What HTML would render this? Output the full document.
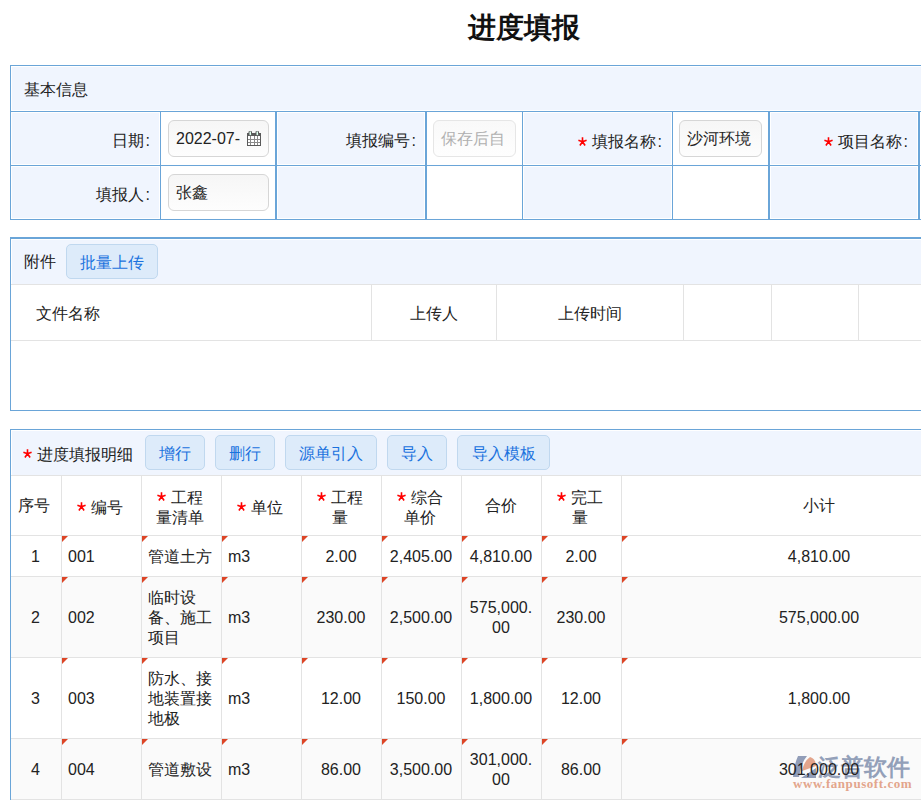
<!DOCTYPE html>
<html><head><meta charset="utf-8">
<style>
*{margin:0;padding:0;box-sizing:border-box}
html,body{width:921px;height:800px;overflow:hidden;background:#fff}
body{position:relative;font-family:"Liberation Sans",sans-serif;font-size:16px;color:#222}
.a{position:absolute}
.t{position:absolute;white-space:nowrap;line-height:20px}
.st{display:inline-block;vertical-align:0px;margin-right:5px}
.c{margin-left:2px}
.inp{position:absolute;height:37px;border:1px solid #d6d6d6;border-radius:6px;background:linear-gradient(#f6f6f6,#fdfdfd);overflow:hidden;white-space:nowrap;line-height:35px;padding-left:7px}
.btn{position:absolute;height:35px;border:1px solid #c0d8ef;border-radius:5px;background:#ddebfa;color:#1a72de;text-align:center;line-height:34px;white-space:nowrap;padding-top:1px}
.tri{position:absolute;width:0;height:0;border-top:6px solid #dc4526;border-right:6px solid transparent}
</style></head><body>
<div class="t" style="left:468px;top:10px;font-size:28px;line-height:36px;font-weight:bold;color:#111">进度填报</div>
<div class="a" style="left:11px;top:66px;width:910px;height:45px;background:#f0f5fe;border-top:1px solid #fff;border-left:1px solid #fff;border-bottom:1px solid #fff"></div>
<div class="a" style="left:10px;top:65px;width:911px;height:1px;background:#6aa5d8"></div>
<div class="a" style="left:10px;top:65px;width:1px;height:155px;background:#6aa5d8"></div>
<div class="t" style="left:24px;top:80px;">基本信息</div>
<div class="a" style="left:10px;top:111px;width:911px;height:1px;background:#6aa5d8"></div>
<div class="a" style="left:10px;top:165px;width:911px;height:1px;background:#6aa5d8"></div>
<div class="a" style="left:10px;top:219px;width:911px;height:1px;background:#6aa5d8"></div>
<div class="a" style="left:11px;top:112px;width:149px;height:53px;background:#f0f5fe;border:1px solid #fff"></div>
<div class="a" style="left:277px;top:112px;width:148px;height:53px;background:#f0f5fe;border:1px solid #fff"></div>
<div class="a" style="left:523px;top:112px;width:149px;height:53px;background:#f0f5fe;border:1px solid #fff"></div>
<div class="a" style="left:770px;top:112px;width:148px;height:53px;background:#f0f5fe;border:1px solid #fff"></div>
<div class="a" style="left:920px;top:112px;width:10px;height:53px;background:#f0f5fe;border:1px solid #fff"></div>
<div class="a" style="left:11px;top:166px;width:149px;height:53px;background:#f0f5fe;border:1px solid #fff"></div>
<div class="a" style="left:277px;top:166px;width:148px;height:53px;background:#f0f5fe;border:1px solid #fff"></div>
<div class="a" style="left:523px;top:166px;width:149px;height:53px;background:#f0f5fe;border:1px solid #fff"></div>
<div class="a" style="left:770px;top:166px;width:148px;height:53px;background:#f0f5fe;border:1px solid #fff"></div>
<div class="a" style="left:920px;top:166px;width:10px;height:53px;background:#f0f5fe;border:1px solid #fff"></div>
<div class="a" style="left:160px;top:111px;width:1px;height:55px;background:#6aa5d8"></div>
<div class="a" style="left:275px;top:111px;width:2px;height:55px;background:#6aa5d8"></div>
<div class="a" style="left:425px;top:111px;width:2px;height:55px;background:#6aa5d8"></div>
<div class="a" style="left:522px;top:111px;width:1px;height:55px;background:#6aa5d8"></div>
<div class="a" style="left:672px;top:111px;width:1px;height:55px;background:#6aa5d8"></div>
<div class="a" style="left:768px;top:111px;width:2px;height:55px;background:#6aa5d8"></div>
<div class="a" style="left:918px;top:111px;width:2px;height:55px;background:#6aa5d8"></div>
<div class="a" style="left:160px;top:165px;width:1px;height:55px;background:#6aa5d8"></div>
<div class="a" style="left:275px;top:165px;width:2px;height:55px;background:#6aa5d8"></div>
<div class="a" style="left:425px;top:165px;width:2px;height:55px;background:#6aa5d8"></div>
<div class="a" style="left:522px;top:165px;width:1px;height:55px;background:#6aa5d8"></div>
<div class="a" style="left:672px;top:165px;width:1px;height:55px;background:#6aa5d8"></div>
<div class="a" style="left:768px;top:165px;width:2px;height:55px;background:#6aa5d8"></div>
<div class="a" style="left:918px;top:165px;width:2px;height:55px;background:#6aa5d8"></div>
<div class="t" style="right:771px;top:131px;">日期<span class=c>:</span></div>
<div class="t" style="right:505px;top:131px;">填报编号<span class=c>:</span></div>
<div class="t" style="right:259px;top:132px;"><svg class="st" style="vertical-align:1px" width="9" height="9" viewBox="0 0 9 9"><path d="M4.5 4.7V0.2M4.5 4.7L0.4 3.3M4.5 4.7L8.6 3.3M4.5 4.7L1.9 8.5M4.5 4.7L7.1 8.5" stroke="#f00" stroke-width="1.6" fill="none"/></svg>填报名称<span class=c>:</span></div>
<div class="t" style="right:13px;top:132px;"><svg class="st" style="vertical-align:1px" width="9" height="9" viewBox="0 0 9 9"><path d="M4.5 4.7V0.2M4.5 4.7L0.4 3.3M4.5 4.7L8.6 3.3M4.5 4.7L1.9 8.5M4.5 4.7L7.1 8.5" stroke="#f00" stroke-width="1.6" fill="none"/></svg>项目名称<span class=c>:</span></div>
<div class="t" style="right:771px;top:185px;">填报人<span class=c>:</span></div>
<div class="inp" style="left:168px;top:120px;width:101px;">2022-07-<svg class="a" style="left:78px;top:10px" width="14" height="15" viewBox="0 0 14 15"><rect x="0.5" y="2.5" width="13" height="12" fill="#fff" stroke="#5a5a5a"/><rect x="0" y="2" width="14" height="3" fill="#5a5a5a"/><path d="M3.5 5v9M7.5 5v9M10.5 5v9M1 8.5h12M1 11.5h12" stroke="#8a8a8a" stroke-width="1"/><rect x="2" y="0" width="2.5" height="4.5" rx="1" fill="#dfe" stroke="#5a5a5a" stroke-width="1"/><rect x="9" y="0" width="2.5" height="4.5" rx="1" fill="#dfe" stroke="#5a5a5a" stroke-width="1"/></svg></div>
<div class="inp" style="left:433px;top:120px;width:83px;color:#b0b0b0;border-color:#e6e6e6;background:linear-gradient(#f9f9f9,#fefefe)">保存后自</div>
<div class="inp" style="left:679px;top:120px;width:83px;">沙河环境</div>
<div class="inp" style="left:168px;top:174px;width:101px;">张鑫</div>
<div class="a" style="left:11px;top:239px;width:910px;height:45px;background:#f0f5fe;border-top:1px solid #fff;border-left:1px solid #fff"></div>
<div class="a" style="left:10px;top:237px;width:911px;height:2px;background:#6aa5d8"></div>
<div class="a" style="left:10px;top:237px;width:1px;height:174px;background:#6aa5d8"></div>
<div class="a" style="left:10px;top:410px;width:911px;height:1px;background:#6aa5d8"></div>
<div class="t" style="left:24px;top:252px;">附件</div>
<div class="btn" style="left:66px;top:244px;width:92px">批量上传</div>
<div class="a" style="left:11px;top:284px;width:910px;height:1px;background:#e3e3e3"></div>
<div class="a" style="left:11px;top:340px;width:910px;height:1px;background:#e3e3e3"></div>
<div class="a" style="left:371px;top:285px;width:1px;height:55px;background:#e3e3e3"></div>
<div class="a" style="left:496px;top:285px;width:1px;height:55px;background:#e3e3e3"></div>
<div class="a" style="left:683px;top:285px;width:1px;height:55px;background:#e3e3e3"></div>
<div class="a" style="left:771px;top:285px;width:1px;height:55px;background:#e3e3e3"></div>
<div class="a" style="left:858px;top:285px;width:1px;height:55px;background:#e3e3e3"></div>
<div class="t" style="left:36px;top:304px;">文件名称</div>
<div class="t" style="left:371px;top:304px;width:125px;text-align:center;">上传人</div>
<div class="t" style="left:496px;top:304px;width:187px;text-align:center;">上传时间</div>
<div class="a" style="left:11px;top:430px;width:910px;height:45px;background:#f0f5fe;border-top:1px solid #fff;border-left:1px solid #fff"></div>
<div class="a" style="left:10px;top:429px;width:911px;height:1px;background:#6aa5d8"></div>
<div class="a" style="left:10px;top:429px;width:1px;height:371px;background:#6aa5d8"></div>
<div class="t" style="left:23px;top:445px;"><svg class="st" style="vertical-align:2px" width="9" height="9" viewBox="0 0 9 9"><path d="M4.5 4.7V0.2M4.5 4.7L0.4 3.3M4.5 4.7L8.6 3.3M4.5 4.7L1.9 8.5M4.5 4.7L7.1 8.5" stroke="#f00" stroke-width="1.6" fill="none"/></svg>进度填报明细</div>
<div class="btn" style="left:145px;top:435px;width:60px;height:35px;line-height:33px">增行</div>
<div class="btn" style="left:215px;top:435px;width:60px;height:35px;line-height:33px">删行</div>
<div class="btn" style="left:285px;top:435px;width:92px;height:35px;line-height:33px">源单引入</div>
<div class="btn" style="left:387px;top:435px;width:60px;height:35px;line-height:33px">导入</div>
<div class="btn" style="left:457px;top:435px;width:93px;height:35px;line-height:33px">导入模板</div>
<div class="a" style="left:11px;top:475px;width:910px;height:1px;background:#e3e3e3"></div>
<div class="a" style="left:11px;top:577px;width:910px;height:80px;background:#fafafa;"></div>
<div class="a" style="left:11px;top:739px;width:910px;height:61px;background:#fafafa;"></div>
<svg class="a" style="left:790px;top:754px" width="30" height="28" viewBox="0 0 30 28">
<path d="M8 2 L17 2 Q11 9 9 23 L3 23 Q4 11 8 2 Z" fill="#8592b0" opacity="0.9"/>
<path d="M12 17 Q14 7 20 3 Q26 5 26 12 Z" fill="#e3a58c"/>
<path d="M11 24 L26 14 L26 24 Z" fill="#8592b0" opacity="0.9"/>
</svg>
<div class="t" style="left:818px;top:753px;font-size:23px;line-height:28px;font-weight:bold;color:#93a0b9">泛普软件</div>
<div class="t" style="left:793px;top:777px;font-family:'Liberation Serif',serif;font-weight:bold;font-size:13px;line-height:14px;color:#e3a58c;letter-spacing:0.55px">www.fanpusoft.com</div>
<div class="a" style="left:11px;top:535px;width:910px;height:1px;background:#e3e3e3"></div>
<div class="a" style="left:11px;top:576px;width:910px;height:1px;background:#e3e3e3"></div>
<div class="a" style="left:11px;top:657px;width:910px;height:1px;background:#e3e3e3"></div>
<div class="a" style="left:11px;top:738px;width:910px;height:1px;background:#e3e3e3"></div>
<div class="a" style="left:11px;top:799px;width:910px;height:1px;background:#e3e3e3"></div>
<div class="a" style="left:61px;top:476px;width:1px;height:324px;background:#e3e3e3"></div>
<div class="a" style="left:141px;top:476px;width:1px;height:324px;background:#e3e3e3"></div>
<div class="a" style="left:221px;top:476px;width:1px;height:324px;background:#e3e3e3"></div>
<div class="a" style="left:301px;top:476px;width:1px;height:324px;background:#e3e3e3"></div>
<div class="a" style="left:381px;top:476px;width:1px;height:324px;background:#e3e3e3"></div>
<div class="a" style="left:461px;top:476px;width:1px;height:324px;background:#e3e3e3"></div>
<div class="a" style="left:541px;top:476px;width:1px;height:324px;background:#e3e3e3"></div>
<div class="a" style="left:621px;top:476px;width:1px;height:324px;background:#e3e3e3"></div>
<div class="t" style="left:8px;top:496px;width:51px;text-align:center;">序号</div>
<div class="t" style="left:61px;top:498px;width:80px;text-align:center;padding-right:3px"><svg class="st" style="vertical-align:2px" width="9" height="9" viewBox="0 0 9 9"><path d="M4.5 4.7V0.2M4.5 4.7L0.4 3.3M4.5 4.7L8.6 3.3M4.5 4.7L1.9 8.5M4.5 4.7L7.1 8.5" stroke="#f00" stroke-width="1.6" fill="none"/></svg>编号</div>
<div class="t" style="left:141px;top:488px;width:80px;text-align:center;padding-right:3px"><svg class="st" style="vertical-align:2px" width="9" height="9" viewBox="0 0 9 9"><path d="M4.5 4.7V0.2M4.5 4.7L0.4 3.3M4.5 4.7L8.6 3.3M4.5 4.7L1.9 8.5M4.5 4.7L7.1 8.5" stroke="#f00" stroke-width="1.6" fill="none"/></svg>工程<br>量清单</div>
<div class="t" style="left:221px;top:498px;width:80px;text-align:center;padding-right:3px"><svg class="st" style="vertical-align:2px" width="9" height="9" viewBox="0 0 9 9"><path d="M4.5 4.7V0.2M4.5 4.7L0.4 3.3M4.5 4.7L8.6 3.3M4.5 4.7L1.9 8.5M4.5 4.7L7.1 8.5" stroke="#f00" stroke-width="1.6" fill="none"/></svg>单位</div>
<div class="t" style="left:301px;top:488px;width:80px;text-align:center;padding-right:3px"><svg class="st" style="vertical-align:2px" width="9" height="9" viewBox="0 0 9 9"><path d="M4.5 4.7V0.2M4.5 4.7L0.4 3.3M4.5 4.7L8.6 3.3M4.5 4.7L1.9 8.5M4.5 4.7L7.1 8.5" stroke="#f00" stroke-width="1.6" fill="none"/></svg>工程<br>量</div>
<div class="t" style="left:381px;top:488px;width:80px;text-align:center;padding-right:3px"><svg class="st" style="vertical-align:2px" width="9" height="9" viewBox="0 0 9 9"><path d="M4.5 4.7V0.2M4.5 4.7L0.4 3.3M4.5 4.7L8.6 3.3M4.5 4.7L1.9 8.5M4.5 4.7L7.1 8.5" stroke="#f00" stroke-width="1.6" fill="none"/></svg>综合<br>单价</div>
<div class="t" style="left:461px;top:496px;width:80px;text-align:center;">合价</div>
<div class="t" style="left:541px;top:488px;width:80px;text-align:center;padding-right:3px"><svg class="st" style="vertical-align:2px" width="9" height="9" viewBox="0 0 9 9"><path d="M4.5 4.7V0.2M4.5 4.7L0.4 3.3M4.5 4.7L8.6 3.3M4.5 4.7L1.9 8.5M4.5 4.7L7.1 8.5" stroke="#f00" stroke-width="1.6" fill="none"/></svg>完工<br>量</div>
<div class="t" style="left:621px;top:496px;width:396px;text-align:center;">小计</div>
<div class="tri" style="left:62px;top:536px"></div>
<div class="tri" style="left:142px;top:536px"></div>
<div class="tri" style="left:222px;top:536px"></div>
<div class="tri" style="left:302px;top:536px"></div>
<div class="tri" style="left:382px;top:536px"></div>
<div class="tri" style="left:462px;top:536px"></div>
<div class="tri" style="left:542px;top:536px"></div>
<div class="tri" style="left:622px;top:536px"></div>
<div class="tri" style="left:62px;top:577px"></div>
<div class="tri" style="left:142px;top:577px"></div>
<div class="tri" style="left:222px;top:577px"></div>
<div class="tri" style="left:302px;top:577px"></div>
<div class="tri" style="left:382px;top:577px"></div>
<div class="tri" style="left:462px;top:577px"></div>
<div class="tri" style="left:542px;top:577px"></div>
<div class="tri" style="left:622px;top:577px"></div>
<div class="tri" style="left:62px;top:658px"></div>
<div class="tri" style="left:142px;top:658px"></div>
<div class="tri" style="left:222px;top:658px"></div>
<div class="tri" style="left:302px;top:658px"></div>
<div class="tri" style="left:382px;top:658px"></div>
<div class="tri" style="left:462px;top:658px"></div>
<div class="tri" style="left:542px;top:658px"></div>
<div class="tri" style="left:622px;top:658px"></div>
<div class="tri" style="left:62px;top:739px"></div>
<div class="tri" style="left:142px;top:739px"></div>
<div class="tri" style="left:222px;top:739px"></div>
<div class="tri" style="left:302px;top:739px"></div>
<div class="tri" style="left:382px;top:739px"></div>
<div class="tri" style="left:462px;top:739px"></div>
<div class="tri" style="left:542px;top:739px"></div>
<div class="tri" style="left:622px;top:739px"></div>
<div class="t" style="left:10px;top:547px;width:51px;text-align:center;">1</div>
<div class="t" style="left:68px;top:547px;">001</div>
<div class="t" style="left:148px;top:547px;">管道土方</div>
<div class="t" style="left:228px;top:547px;">m3</div>
<div class="t" style="left:301px;top:547px;width:80px;text-align:center;">2.00</div>
<div class="t" style="left:381px;top:547px;width:80px;text-align:center;">2,405.00</div>
<div class="t" style="left:461px;top:547px;width:80px;text-align:center;">4,810.00</div>
<div class="t" style="left:541px;top:547px;width:80px;text-align:center;">2.00</div>
<div class="t" style="left:621px;top:547px;width:396px;text-align:center;">4,810.00</div>
<div class="t" style="left:10px;top:608px;width:51px;text-align:center;">2</div>
<div class="t" style="left:68px;top:608px;">002</div>
<div class="t" style="left:148px;top:588px;">临时设<br>备、施工<br>项目</div>
<div class="t" style="left:228px;top:608px;">m3</div>
<div class="t" style="left:301px;top:608px;width:80px;text-align:center;">230.00</div>
<div class="t" style="left:381px;top:608px;width:80px;text-align:center;">2,500.00</div>
<div class="t" style="left:461px;top:598px;width:80px;text-align:center;">575,000.<br>00</div>
<div class="t" style="left:541px;top:608px;width:80px;text-align:center;">230.00</div>
<div class="t" style="left:621px;top:608px;width:396px;text-align:center;">575,000.00</div>
<div class="t" style="left:10px;top:689px;width:51px;text-align:center;">3</div>
<div class="t" style="left:68px;top:689px;">003</div>
<div class="t" style="left:148px;top:669px;">防水、接<br>地装置接<br>地极</div>
<div class="t" style="left:228px;top:689px;">m3</div>
<div class="t" style="left:301px;top:689px;width:80px;text-align:center;">12.00</div>
<div class="t" style="left:381px;top:689px;width:80px;text-align:center;">150.00</div>
<div class="t" style="left:461px;top:689px;width:80px;text-align:center;">1,800.00</div>
<div class="t" style="left:541px;top:689px;width:80px;text-align:center;">12.00</div>
<div class="t" style="left:621px;top:689px;width:396px;text-align:center;">1,800.00</div>
<div class="t" style="left:10px;top:760px;width:51px;text-align:center;">4</div>
<div class="t" style="left:68px;top:760px;">004</div>
<div class="t" style="left:148px;top:760px;">管道敷设</div>
<div class="t" style="left:228px;top:760px;">m3</div>
<div class="t" style="left:301px;top:760px;width:80px;text-align:center;">86.00</div>
<div class="t" style="left:381px;top:760px;width:80px;text-align:center;">3,500.00</div>
<div class="t" style="left:461px;top:750px;width:80px;text-align:center;">301,000.<br>00</div>
<div class="t" style="left:541px;top:760px;width:80px;text-align:center;">86.00</div>
<div class="t" style="left:621px;top:760px;width:396px;text-align:center;">301,000.00</div>
</body></html>
